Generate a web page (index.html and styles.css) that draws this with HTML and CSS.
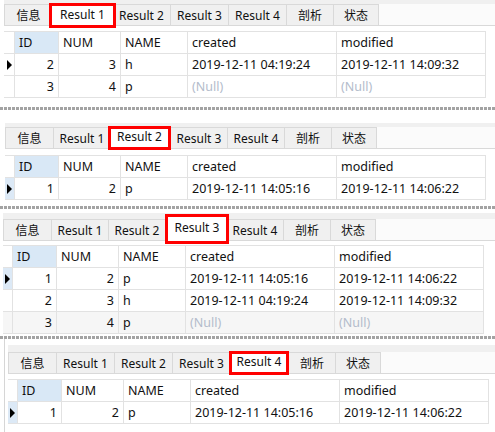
FILE: index.html
```html
<!DOCTYPE html>
<html lang="zh">
<head>
<meta charset="utf-8">
<title>Results</title>
<link rel="stylesheet" href="styles.css">
</head>
<body>
<div class="shot">

  <section class="panel p1">
    <div class="strip"></div>
    <div class="tabs">
      <div class="tab info">信息</div>
      <div class="tab res on">Result 1</div>
      <div class="tab res">Result 2</div>
      <div class="tab res">Result 3</div>
      <div class="tab res">Result 4</div>
      <div class="tab prof">剖析</div>
      <div class="tab stat">状态</div>
    </div>
    <div class="grid">
      <div class="c ind"></div><div class="c hsel">ID</div><div class="c">NUM</div><div class="c">NAME</div><div class="c">created</div><div class="c">modified</div>
      <div class="c ind"><span class="tri"></span></div><div class="c r">2</div><div class="c r">3</div><div class="c">h</div><div class="c">2019-12-11 04:19:24</div><div class="c">2019-12-11 14:09:32</div>
      <div class="c ind"></div><div class="c r">3</div><div class="c r">4</div><div class="c">p</div><div class="c nul">(Null)</div><div class="c nul">(Null)</div>
    </div>
  </section>

  <div class="sep"></div>

  <section class="panel p2">
    <div class="strip"></div>
    <div class="tabs">
      <div class="tab info">信息</div>
      <div class="tab res">Result 1</div>
      <div class="tab res on">Result 2</div>
      <div class="tab res">Result 3</div>
      <div class="tab res">Result 4</div>
      <div class="tab prof">剖析</div>
      <div class="tab stat">状态</div>
    </div>
    <div class="grid">
      <div class="c ind"></div><div class="c hsel">ID</div><div class="c">NUM</div><div class="c">NAME</div><div class="c">created</div><div class="c">modified</div>
      <div class="c ind cur"><span class="tri"></span></div><div class="c r">1</div><div class="c r">2</div><div class="c">p</div><div class="c">2019-12-11 14:05:16</div><div class="c">2019-12-11 14:06:22</div>
    </div>
  </section>

  <div class="sep"></div>

  <section class="panel p3">
    <div class="strip"></div>
    <div class="tabs">
      <div class="tab info">信息</div>
      <div class="tab res">Result 1</div>
      <div class="tab res">Result 2</div>
      <div class="tab res on">Result 3</div>
      <div class="tab res">Result 4</div>
      <div class="tab prof">剖析</div>
      <div class="tab stat">状态</div>
    </div>
    <div class="grid">
      <div class="c ind"></div><div class="c hsel">ID</div><div class="c">NUM</div><div class="c">NAME</div><div class="c">created</div><div class="c">modified</div>
      <div class="c ind cur"><span class="tri"></span></div><div class="c r">1</div><div class="c r">2</div><div class="c">p</div><div class="c">2019-12-11 14:05:16</div><div class="c">2019-12-11 14:06:22</div>
      <div class="c ind"></div><div class="c r">2</div><div class="c r">3</div><div class="c">h</div><div class="c">2019-12-11 04:19:24</div><div class="c">2019-12-11 14:09:32</div>
      <div class="c ind alt"></div><div class="c r alt">3</div><div class="c r alt">4</div><div class="c alt">p</div><div class="c nul alt">(Null)</div><div class="c nul alt">(Null)</div>
    </div>
  </section>

  <div class="sep"></div>

  <section class="panel p4">
    <div class="strip"></div>
    <div class="tabs">
      <div class="tab info">信息</div>
      <div class="tab res">Result 1</div>
      <div class="tab res">Result 2</div>
      <div class="tab res">Result 3</div>
      <div class="tab res on">Result 4</div>
      <div class="tab prof">剖析</div>
      <div class="tab stat">状态</div>
    </div>
    <div class="grid">
      <div class="c ind"></div><div class="c hsel">ID</div><div class="c">NUM</div><div class="c">NAME</div><div class="c">created</div><div class="c">modified</div>
      <div class="c ind cur"><span class="tri"></span></div><div class="c r">1</div><div class="c r">2</div><div class="c">p</div><div class="c">2019-12-11 14:05:16</div><div class="c">2019-12-11 14:06:22</div>
    </div>
  </section>

</div>
</body>
</html>
```

FILE: styles.css
```css
html, body {
  margin: 0;
  padding: 0;
  background: #ffffff;
}

body {
  font-family: "Noto Sans", "Noto Sans CJK SC", sans-serif;
  color: #111111;
}

.shot {
  width: 495px;
  height: 432px;
  overflow: hidden;
  display: flex;
  flex-direction: column;
}

.panel {
  --x: 4px;
  --top: 0px;
  --strip: 4px;
  --gap: 5px;
  --bot: 9px;
  --ind: 10px;
  --rw: 57px;
  --bw: 64px;
  --bh: 24px;
  --bt: -1px;
  --bml: 0px;
  --bmr: 0px;
  padding-left: var(--x);
  padding-top: var(--top);
  padding-bottom: var(--bot);
  flex: none;
}

.p1 { --x: 4px; --top: 0px; --strip: 4px; --gap: 5px; --bot: 9px; --ind: 11px; --rw: 58px; --bw: 67px; --bh: 25px; --bt: -1px; --bml: -3px; --bmr: -4px; }
.p2 { --x: 5px; --top: 13px; --strip: 4px; --gap: 6px; --bot: 6px; --rw: 57px; --bw: 63px; --bh: 24px; --bt: -1px; --bml: -2px; --bmr: -1px; }
.p3 { --x: 3px; --top: 4px; --strip: 6px; --gap: 4px; --bot: 2px; --rw: 57px; --bw: 64px; --bh: 30px; --bt: -5px; --bml: 0px; --bmr: -3px; }
.p4 { --x: 3px; --top: 6px; --strip: 7px; --gap: 5px; --bot: 20px; --rw: 58px; --bw: 60px; --bh: 24px; --bt: -1px; --bml: -1px; --bmr: -1px;
  margin-left: 4px;
  border-left: 1px solid #d6d6d6;
}

.strip {
  height: var(--strip);
  background: #f0f0f0;
}

.tabs {
  display: flex;
  align-items: flex-start;
  height: 22px;
  box-sizing: border-box;
  border-bottom: 1px solid #d9d9d9;
  background: #fbfbfb;
}

.tab {
  flex: none;
  height: 21px;
  box-sizing: border-box;
  border-top: 1px solid #d9d9d9;
  border-left: 1px solid #d9d9d9;
  background: #f0f0f0;
  display: flex;
  align-items: center;
  justify-content: center;
  font-size: 12px;
  color: #111111;
  white-space: nowrap;
}

.tab.info { width: 48px; }
.tab.res { width: var(--rw); }
.tab.prof { width: 47px; }
.tab.stat { width: 46px; border-right: 1px solid #d9d9d9; }

.tab.on {
  width: var(--bw);
  height: var(--bh);
  margin-top: var(--bt);
  margin-left: var(--bml);
  margin-right: var(--bmr);
  border: 3px solid #ff0000;
  background: #ffffff;
  padding-bottom: 3px;
  z-index: 2;
  position: relative;
}

.grid {
  margin-top: var(--gap);
  display: grid;
  grid-template-columns: var(--ind) 44px 62px 67px 149px 149px;
  width: max-content;
  border-top: 1px solid #e2e2e2;
}

.c {
  height: 22px;
  box-sizing: border-box;
  border-right: 1px solid #e2e2e2;
  border-bottom: 1px solid #e2e2e2;
  padding: 0 4px;
  display: flex;
  align-items: center;
  font-size: 12.5px;
  white-space: nowrap;
  overflow: hidden;
}

.c.r { justify-content: flex-end; }

.c.ind {
  padding: 0;
  justify-content: center;
}

.c.cur { background: #dce9f6; }
.c.hsel { background: #d9e8f6; }
.c.alt { background: #f6f6f6; }
.c.nul { color: #b3bccb; }

.tri {
  width: 0;
  height: 0;
  border-left: 5px solid #000000;
  border-top: 5px solid transparent;
  border-bottom: 5px solid transparent;
}

.sep {
  flex: none;
  height: 3px;
  background: repeating-linear-gradient(90deg, #a3a3a3 0 3px, transparent 3px 4px);
}
```
